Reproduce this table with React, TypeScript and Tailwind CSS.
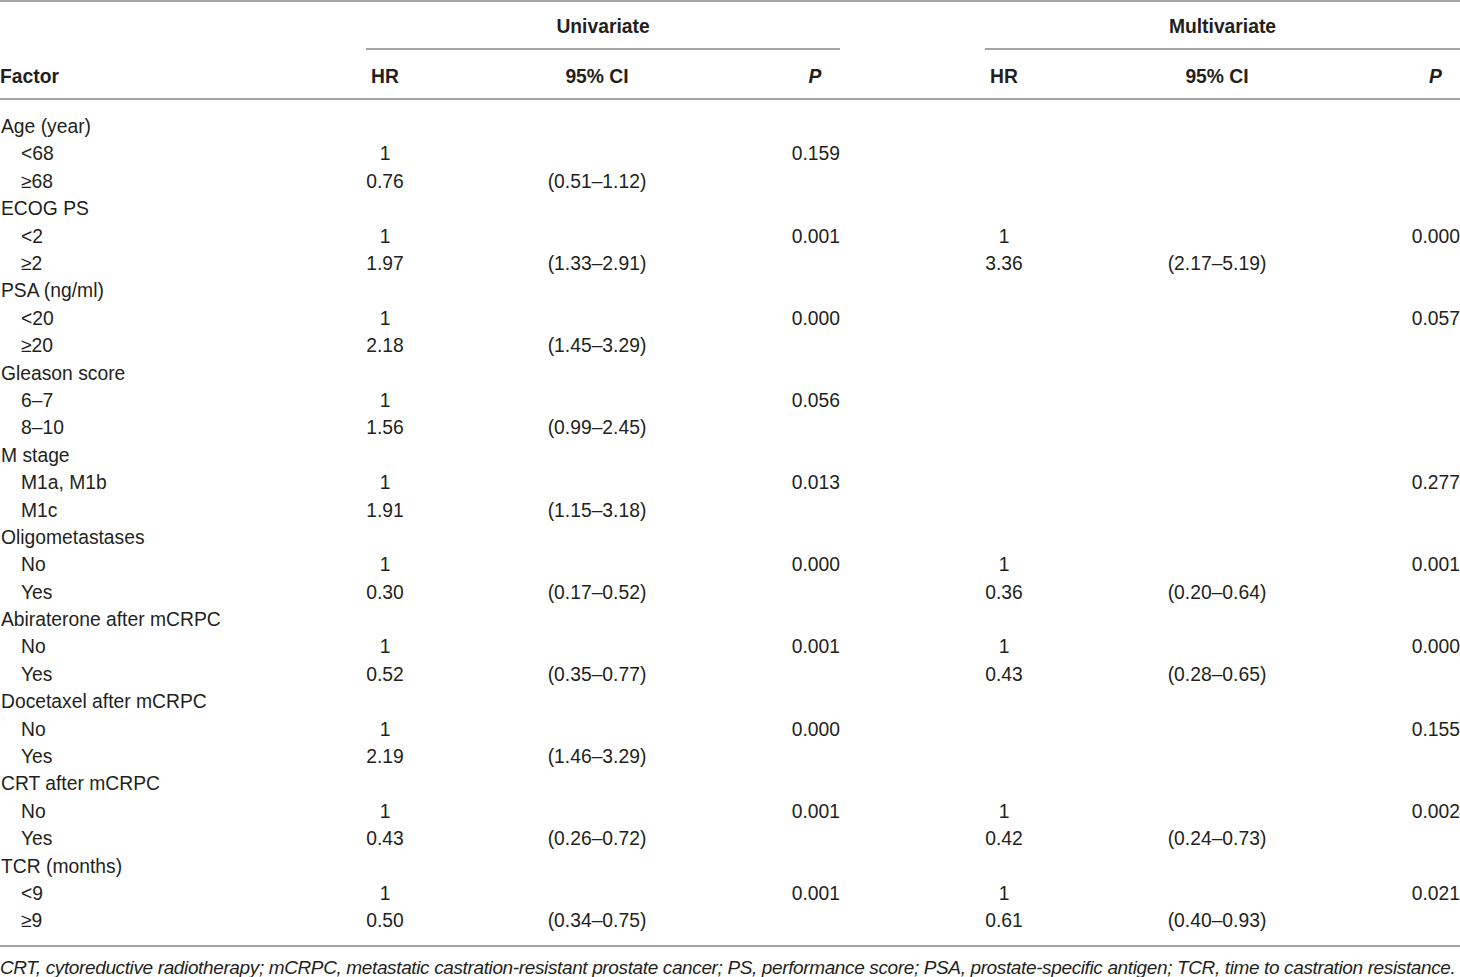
type Row = {
  label: string;
  sub?: boolean;
  hr1?: string;
  ci1?: string;
  p1?: string;
  hr2?: string;
  ci2?: string;
  p2?: string;
};

const rows: Row[] = [
  { label: 'Age (year)' },
  { label: '<68', sub: true, hr1: '1', p1: '0.159' },
  { label: '≥68', sub: true, hr1: '0.76', ci1: '(0.51–1.12)' },
  { label: 'ECOG PS' },
  { label: '<2', sub: true, hr1: '1', p1: '0.001', hr2: '1', p2: '0.000' },
  { label: '≥2', sub: true, hr1: '1.97', ci1: '(1.33–2.91)', hr2: '3.36', ci2: '(2.17–5.19)' },
  { label: 'PSA (ng/ml)' },
  { label: '<20', sub: true, hr1: '1', p1: '0.000', p2: '0.057' },
  { label: '≥20', sub: true, hr1: '2.18', ci1: '(1.45–3.29)' },
  { label: 'Gleason score' },
  { label: '6–7', sub: true, hr1: '1', p1: '0.056' },
  { label: '8–10', sub: true, hr1: '1.56', ci1: '(0.99–2.45)' },
  { label: 'M stage' },
  { label: 'M1a, M1b', sub: true, hr1: '1', p1: '0.013', p2: '0.277' },
  { label: 'M1c', sub: true, hr1: '1.91', ci1: '(1.15–3.18)' },
  { label: 'Oligometastases' },
  { label: 'No', sub: true, hr1: '1', p1: '0.000', hr2: '1', p2: '0.001' },
  { label: 'Yes', sub: true, hr1: '0.30', ci1: '(0.17–0.52)', hr2: '0.36', ci2: '(0.20–0.64)' },
  { label: 'Abiraterone after mCRPC' },
  { label: 'No', sub: true, hr1: '1', p1: '0.001', hr2: '1', p2: '0.000' },
  { label: 'Yes', sub: true, hr1: '0.52', ci1: '(0.35–0.77)', hr2: '0.43', ci2: '(0.28–0.65)' },
  { label: 'Docetaxel after mCRPC' },
  { label: 'No', sub: true, hr1: '1', p1: '0.000', p2: '0.155' },
  { label: 'Yes', sub: true, hr1: '2.19', ci1: '(1.46–3.29)' },
  { label: 'CRT after mCRPC' },
  { label: 'No', sub: true, hr1: '1', p1: '0.001', hr2: '1', p2: '0.002' },
  { label: 'Yes', sub: true, hr1: '0.43', ci1: '(0.26–0.72)', hr2: '0.42', ci2: '(0.24–0.73)' },
  { label: 'TCR (months)' },
  { label: '<9', sub: true, hr1: '1', p1: '0.001', hr2: '1', p2: '0.021' },
  { label: '≥9', sub: true, hr1: '0.50', ci1: '(0.34–0.75)', hr2: '0.61', ci2: '(0.40–0.93)' },
];

const cols = 'grid grid-cols-[366px_38px_386px_50px_145px_38px_388px_49px]';

export default function App() {
  return (
    <main
      className="w-[1460px] h-[977px] bg-white text-[#231f20] text-[19.3px] leading-none"
      style={{ fontFamily: '"Liberation Sans", Arial, sans-serif' }}
    >
      <div className="border-t-2 border-[#a3a3a3]">
        {/* group headers */}
        <div className={`${cols} h-[48px] font-bold`}>
          <div />
          <div className="col-span-3 flex flex-col justify-between">
            <span className="text-center pt-[15px]">Univariate</span>
            <div className="h-[2px] bg-[#a3a3a3]" />
          </div>
          <div />
          <div className="col-span-3 flex flex-col justify-between">
            <span className="text-center pt-[15px]">Multivariate</span>
            <div className="h-[2px] bg-[#a3a3a3]" />
          </div>
        </div>

        {/* column headers */}
        <div className={`${cols} h-[50px] pt-[5px] items-center font-bold border-b-2 border-[#a3a3a3]`}>
          <div>Factor</div>
          <div className="text-center">HR</div>
          <div className="text-center">95% CI</div>
          <div className="text-center italic">P</div>
          <div />
          <div className="text-center">HR</div>
          <div className="text-center">95% CI</div>
          <div className="text-center italic">P</div>
        </div>

        {/* body */}
        <div className="pt-[13px] pb-[10px] border-b-2 border-[#a3a3a3]">
          {rows.map((r, i) => (
            <div key={i} className={`${cols} h-[27.4px] items-center whitespace-nowrap`}>
              <div className={r.sub ? 'pl-[21px]' : 'pl-[1px]'}>{r.label}</div>
              <div className="text-center">{r.hr1}</div>
              <div className="text-center">{r.ci1}</div>
              <div className="text-right">{r.p1}</div>
              <div />
              <div className="text-center">{r.hr2}</div>
              <div className="text-center">{r.ci2}</div>
              <div className="text-right">{r.p2}</div>
            </div>
          ))}
        </div>

        <p className="italic pt-[11px] whitespace-nowrap text-[19px] tracking-[-0.37px]">
          CRT, cytoreductive radiotherapy; mCRPC, metastatic castration-resistant prostate cancer; PS, performance score; PSA, prostate-specific antigen; TCR, time to castration resistance.
        </p>
      </div>
    </main>
  );
}
